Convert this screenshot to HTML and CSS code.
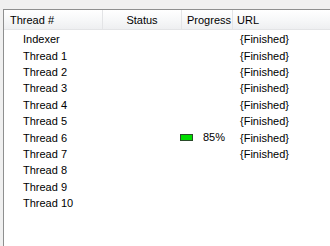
FILE: index.html
```html
<!DOCTYPE html>
<html>
<head>
<meta charset="utf-8">
<link rel="stylesheet" href="styles.css">
</head>
<body>
<div class="top"></div>
<div class="panel">
  <div class="row head">
    <div class="c c1">Thread #</div>
    <div class="c c2">Status</div>
    <div class="c c3">Progress</div>
    <div class="c c4">URL</div>
  </div>
  <div class="rows">
    <div class="row"><div class="c c1">Indexer</div><div class="c c2"></div><div class="c c3"></div><div class="c c4">{Finished}</div></div>
    <div class="row"><div class="c c1">Thread 1</div><div class="c c2"></div><div class="c c3"></div><div class="c c4">{Finished}</div></div>
    <div class="row"><div class="c c1">Thread 2</div><div class="c c2"></div><div class="c c3"></div><div class="c c4">{Finished}</div></div>
    <div class="row"><div class="c c1">Thread 3</div><div class="c c2"></div><div class="c c3"></div><div class="c c4">{Finished}</div></div>
    <div class="row"><div class="c c1">Thread 4</div><div class="c c2"></div><div class="c c3"></div><div class="c c4">{Finished}</div></div>
    <div class="row"><div class="c c1">Thread 5</div><div class="c c2"></div><div class="c c3"></div><div class="c c4">{Finished}</div></div>
    <div class="row"><div class="c c1">Thread 6</div><div class="c c2"></div><div class="c c3"><span class="bar"></span><span class="pct">85%</span></div><div class="c c4">{Finished}</div></div>
    <div class="row"><div class="c c1">Thread 7</div><div class="c c2"></div><div class="c c3"></div><div class="c c4">{Finished}</div></div>
    <div class="row"><div class="c c1">Thread 8</div><div class="c c2"></div><div class="c c3"></div><div class="c c4"></div></div>
    <div class="row"><div class="c c1">Thread 9</div><div class="c c2"></div><div class="c c3"></div><div class="c c4"></div></div>
    <div class="row"><div class="c c1">Thread 10</div><div class="c c2"></div><div class="c c3"></div><div class="c c4"></div></div>
  </div>
</div>
</body>
</html>
```
FILE: styles.css
```css
html, body {
  margin: 0;
  padding: 0;
  background: #f0f0f0;
  height: 100%;
  overflow: hidden;
}
body {
  font-family: "Liberation Sans", Arial, sans-serif;
  font-size: 11px;
  color: #000;
  display: flex;
  flex-direction: column;
}
.top {
  height: 9px;
  flex: none;
}
.panel {
  flex: 1;
  margin-left: 3px;
  background: #fff;
  border-top: 1px solid #8e8f8f;
  border-left: 1px solid #8e8f8f;
}
.row {
  display: grid;
  grid-template-columns: 99px 79px 51px 1fr;
  height: 16.4px;
  align-items: center;
}
.head {
  height: 19px;
  background: linear-gradient(#ffffff, #f7f8f9 50%, #eeeff1);
  border-bottom: 1px solid #e3e4e6;
}
.head .c {
  height: 100%;
  display: flex;
  align-items: center;
  border-right: 1px solid #e3e4e6;
  box-sizing: border-box;
}
.head .c1 { padding-left: 6px; }
.head .c2 { justify-content: center; }
.head .c3 { padding-left: 5px; }
.head .c4 { padding-left: 4px; border-right: none; }
.rows {
  padding-top: 1px;
}
.rows .c1 { padding-left: 19px; }
.rows .c4 { padding-left: 7px; }
.rows .c3 {
  display: flex;
  align-items: center;
}
.bar {
  width: 11px;
  height: 5px;
  background: #00dd00;
  border: 1px solid #2a4a2a;
  margin-left: -2px;
  margin-right: 10px;
}
.pct {
  line-height: 1;
}
```
